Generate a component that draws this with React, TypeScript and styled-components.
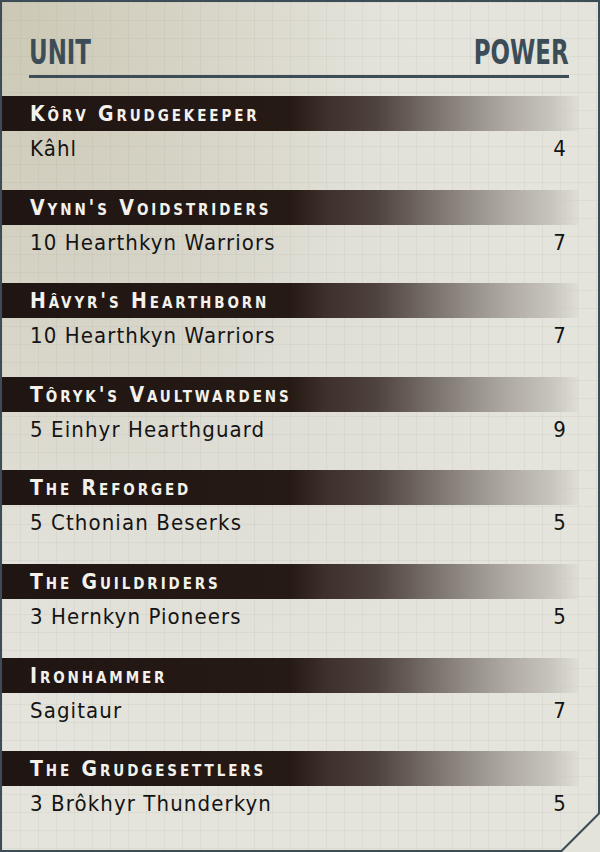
import React from "react"
import styled, { createGlobalStyle } from "styled-components"

const GlobalStyle = createGlobalStyle`
  html, body {
    margin: 0;
    padding: 0;
    background: #e4e3da;
  }
`

const slate = "#3c4d57"
const condensed = `"DejaVu Sans Condensed", "Roboto", "Liberation Sans", sans-serif`

const Frame = styled.div`
  width: 600px;
  height: 852px;
  background: ${slate};
  clip-path: polygon(0 0, 100% 0, 100% 814px, 562px 100%, 0 100%);
  padding: 2px;
  box-sizing: border-box;
`

const Paper = styled.div`
  width: 596px;
  height: 848px;
  clip-path: polygon(0 0, 100% 0, 100% 811px, 559px 100%, 0 100%);
  background-color: #e5e4dc;
  background-image:
    radial-gradient(ellipse at 0% 0%, rgba(160, 150, 110, 0.35), rgba(160, 150, 110, 0) 45%),
    radial-gradient(ellipse at 30% 40%, rgba(120, 115, 100, 0.08), rgba(0, 0, 0, 0) 60%),
    repeating-linear-gradient(to right, rgba(90, 90, 80, 0.06) 0 1px, transparent 1px 18px),
    repeating-linear-gradient(to bottom, rgba(90, 90, 80, 0.06) 0 1px, transparent 1px 18px);
  display: flex;
  flex-direction: column;
`

const Header = styled.div`
  display: flex;
  justify-content: space-between;
  align-items: flex-end;
  margin: 0 29px 0 27px;
  padding-top: 32px;
  padding-bottom: 5px;
  border-bottom: 3px solid ${slate};
`

const HeaderLabel = styled.span<{ $align: "left" | "right" }>`
  display: inline-block;
  font-family: ${condensed};
  font-weight: bold;
  font-size: 34px;
  line-height: 36px;
  color: ${slate};
  transform: scaleX(0.75);
  transform-origin: ${(p) => p.$align} center;
`

const List = styled.div`
  margin-top: 18px;
  display: flex;
  flex-direction: column;
`

const Section = styled.div`
  height: 93.6px;
  display: flex;
  flex-direction: column;
`

const Band = styled.div`
  height: 35px;
  width: 576px;
  padding-left: 28px;
  box-sizing: border-box;
  display: flex;
  align-items: center;
  background: linear-gradient(
    to right,
    #1f1512 0%,
    #261a15 50%,
    #3d2f29 56%,
    #4f433d 65%,
    #6d645e 72%,
    #948e87 81%,
    #b3afa8 89%,
    #c6c3bc 95%,
    rgba(214, 212, 205, 0.4) 100%
  );
  font-family: ${condensed};
  font-weight: bold;
  font-variant: small-caps;
  font-size: 21px;
  letter-spacing: 2.9px;
  color: #f3f1ec;
  padding-top: 1px;
`

const Row = styled.div`
  display: flex;
  justify-content: space-between;
  padding: 3px 31px 0 28px;
  font-family: ${condensed};
  font-size: 22px;
  letter-spacing: 1.1px;
  line-height: 30px;
  color: #141414;
`

const units = [
  { name: "Kôrv Grudgekeeper", unit: "Kâhl", power: 4 },
  { name: "Vynn's Voidstriders", unit: "10 Hearthkyn Warriors", power: 7 },
  { name: "Hâvyr's Hearthborn", unit: "10 Hearthkyn Warriors", power: 7 },
  { name: "Tôryk's Vaultwardens", unit: "5 Einhyr Hearthguard", power: 9 },
  { name: "The Reforged", unit: "5 Cthonian Beserks", power: 5 },
  { name: "The Guildriders", unit: "3 Hernkyn Pioneers", power: 5 },
  { name: "Ironhammer", unit: "Sagitaur", power: 7 },
  { name: "The Grudgesettlers", unit: "3 Brôkhyr Thunderkyn", power: 5 },
]

export default function App() {
  return (
    <>
      <GlobalStyle />
      <Frame>
        <Paper>
          <Header>
            <HeaderLabel $align="left">UNIT</HeaderLabel>
            <HeaderLabel $align="right">POWER</HeaderLabel>
          </Header>
          <List>
            {units.map((u) => (
              <Section key={u.name}>
                <Band>{u.name}</Band>
                <Row>
                  <span>{u.unit}</span>
                  <span>{u.power}</span>
                </Row>
              </Section>
            ))}
          </List>
        </Paper>
      </Frame>
    </>
  )
}
